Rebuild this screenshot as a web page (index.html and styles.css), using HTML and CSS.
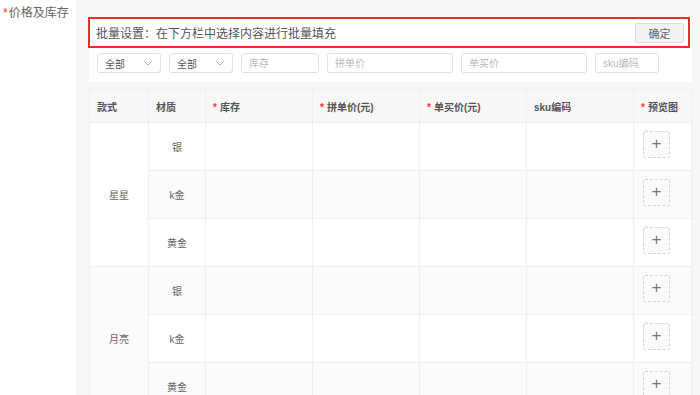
FILE: index.html
```html
<!DOCTYPE html>
<html lang="zh-CN">
  <head>
    <meta charset="UTF-8" />
    <meta name="viewport" content="width=device-width, initial-scale=1.0" />
    <title>价格及库存</title>
    <link rel="stylesheet" href="styles.css">
  </head>
  <body>
    <!-- Field label -->
    <div class="field-label"><span class="req">*</span>价格及库存</div>

    <div class="panel">
      <!-- Batch fill -->
      <div class="batch-card">
        <div class="batch-bar">
          <span>批量设置：在下方栏中选择内容进行批量填充</span>
          <button class="btn-ok">确定</button>
        </div>
        <div class="batch-inputs">
          <div class="select w-sm">全部
            <svg class="arrow" width="10" height="6" viewBox="0 0 10 6"><path d="M1 1l4 4 4-4" fill="none" stroke="#aaa" stroke-width="1"/></svg>
          </div>
          <div class="select w-sm">全部
            <svg class="arrow" width="10" height="6" viewBox="0 0 10 6"><path d="M1 1l4 4 4-4" fill="none" stroke="#aaa" stroke-width="1"/></svg>
          </div>
          <input class="w-md" placeholder="库存" />
          <input class="w-lg" placeholder="拼单价" />
          <input class="w-lg" placeholder="单买价" />
          <input class="w-sm" placeholder="sku编码" />
        </div>
      </div>

      <!-- SKU table -->
      <table class="sku-table">
        <colgroup>
          <col style="width: 59px" />
          <col style="width: 57px" />
          <col style="width: 107px" />
          <col style="width: 107px" />
          <col style="width: 107px" />
          <col style="width: 107px" />
          <col style="width: 58px" />
        </colgroup>
        <thead>
          <tr>
            <th>款式</th>
            <th>材质</th>
            <th><span class="req">*</span>库存</th>
            <th><span class="req">*</span>拼单价(元)</th>
            <th><span class="req">*</span>单买价(元)</th>
            <th>sku编码</th>
            <th><span class="req">*</span>预览图</th>
          </tr>
        </thead>
        <tbody>
          <tr>
            <td class="style-cell" rowspan="3">星星</td>
            <td class="center">银</td>
            <td></td><td></td><td></td><td></td>
            <td><div class="upload">+</div></td>
          </tr>
          <tr class="alt">
            <td class="center">k金</td>
            <td></td><td></td><td></td><td></td>
            <td><div class="upload">+</div></td>
          </tr>
          <tr>
            <td class="center">黄金</td>
            <td></td><td></td><td></td><td></td>
            <td><div class="upload">+</div></td>
          </tr>
          <tr class="alt">
            <td class="style-cell" rowspan="3">月亮</td>
            <td class="center">银</td>
            <td></td><td></td><td></td><td></td>
            <td><div class="upload">+</div></td>
          </tr>
          <tr>
            <td class="center">k金</td>
            <td></td><td></td><td></td><td></td>
            <td><div class="upload">+</div></td>
          </tr>
          <tr class="alt">
            <td class="center">黄金</td>
            <td></td><td></td><td></td><td></td>
            <td><div class="upload">+</div></td>
          </tr>
        </tbody>
      </table>
    </div>
  </body>
</html>
```

FILE: styles.css
```css
/* General */
body {
  margin: 0;
  display: flex;
  height: 395px;
  overflow: hidden;
  font-family: "Liberation Sans", "Noto Sans CJK SC", sans-serif;
  font-size: 11px;
  color: #666;
  background: #fff;
}

.req {
  color: #f33;
  margin-right: 3px;
}

/* Label column */
.field-label {
  width: 76px;
  flex-shrink: 0;
  padding: 3px 0 0 3px;
  box-sizing: border-box;
  font-size: 12px;
  color: #666;
}

.field-label .req {
  margin-right: 1px;
}

/* Panel */
.panel {
  flex: 1;
  background: #f6f6f6;
  padding: 17px 8px 0 13px;
}

.batch-card {
  background: #fff;
  padding-bottom: 9px;
}

.batch-bar {
  height: 31px;
  box-sizing: border-box;
  border: 2px solid #ee2b2b;
  margin-left: -1px;
  margin-right: 2px;
  display: flex;
  align-items: center;
  justify-content: space-between;
  padding: 0 4px 0 6px;
  font-size: 12px;
  color: #555;
}

.btn-ok {
  width: 49px;
  height: 20px;
  border: 1px solid #ddd;
  border-radius: 2px;
  background: #f3f3f3;
  color: #666;
  font-family: inherit;
  font-size: 11px;
  padding: 0;
}

.batch-inputs {
  display: flex;
  gap: 8px;
  margin-top: 5px;
  padding-left: 8px;
}

.batch-inputs input,
.select {
  height: 20px;
  box-sizing: border-box;
  border: 1px solid #e0e0e0;
  border-radius: 3px;
  padding: 0 7px;
  font-family: inherit;
  font-size: 10px;
  color: #666;
  background: #fff;
}

.batch-inputs input::placeholder {
  color: #bbb;
}

.select {
  display: flex;
  align-items: center;
  justify-content: space-between;
  color: #555;
}

.w-sm { width: 64px; }
.w-md { width: 78px; }
.w-lg { width: 126px; }

/* Table */
.sku-table {
  margin-top: 7px;
  width: 602px;
  border-collapse: collapse;
  table-layout: fixed;
  background: #fff;
}

.sku-table th,
.sku-table td {
  border: 1px solid #efefef;
  padding: 0 7px;
}

.sku-table th {
  height: 32px;
  background: #f7f7f7;
  text-align: left;
  font-weight: bold;
  font-size: 10px;
  color: #555;
}

.sku-table td {
  height: 47px;
}

.sku-table tr.alt td {
  background: #fafafa;
}

.sku-table td.center,
.sku-table td.style-cell {
  text-align: center;
  font-size: 10px;
  color: #666;
}

.upload {
  width: 27px;
  height: 27px;
  margin-left: 2px;
  margin-top: -5px;
  box-sizing: border-box;
  border: 1px dashed #d6d6d6;
  border-radius: 2px;
  display: flex;
  align-items: center;
  justify-content: center;
  font-size: 17px;
  font-weight: 300;
  color: #777;
  background: #fafafa;
}
```
